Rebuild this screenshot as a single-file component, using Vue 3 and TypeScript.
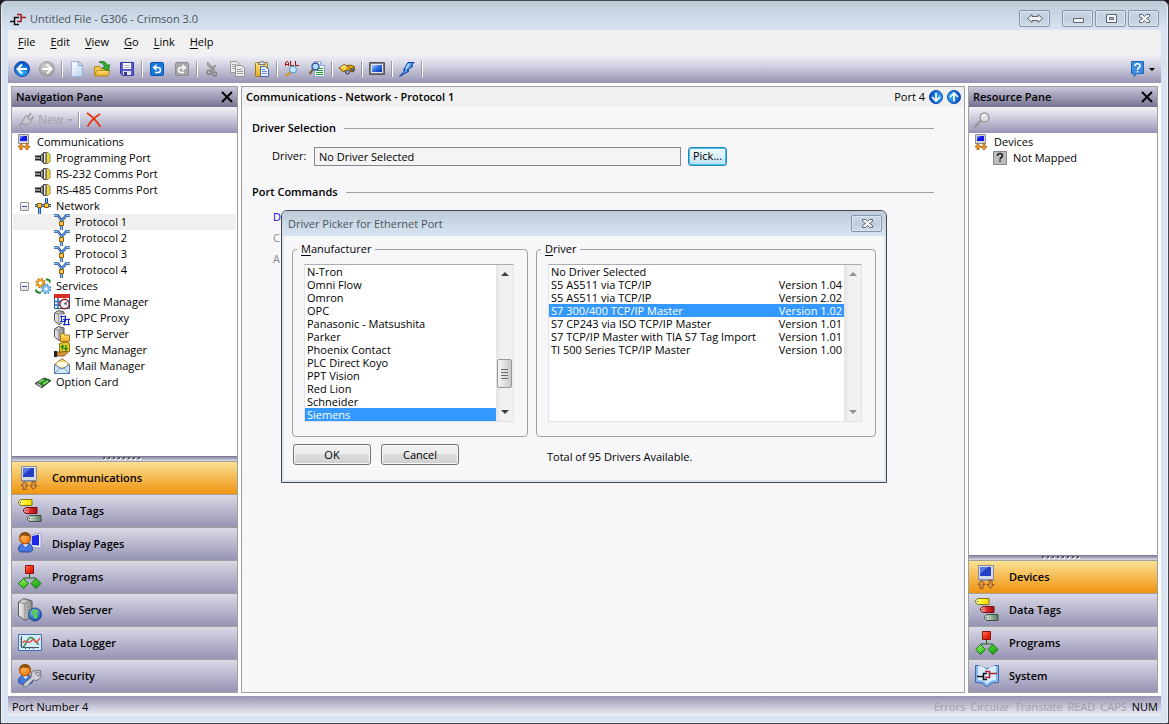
<script setup lang="ts">
import { ref } from 'vue'

interface TreeItem { label: string; icon: string; level: number; toggle?: boolean }
interface NavItem { label: string; icon: string }
interface Tool { label: string; icon: string; disabled?: boolean }
interface Driver { name: string; version: string }

const menus = ['File', 'Edit', 'View', 'Go', 'Link', 'Help']

const toolGroups: Tool[][] = [
  [{ label: 'Back', icon: 'back' }, { label: 'Forward', icon: 'forward', disabled: true }],
  [{ label: 'New', icon: 'new' }, { label: 'Open', icon: 'open' }, { label: 'Save', icon: 'save' }],
  [{ label: 'Undo', icon: 'undo' }, { label: 'Redo', icon: 'redo', disabled: true }],
  [{ label: 'Cut', icon: 'cut', disabled: true }, { label: 'Copy', icon: 'copy', disabled: true }, { label: 'Paste', icon: 'paste' }],
  [{ label: 'Find all', icon: 'findall' }, { label: 'Find', icon: 'findpage' }],
  [{ label: 'Browse', icon: 'binoculars' }],
  [{ label: 'Emulator', icon: 'screen' }],
  [{ label: 'Download', icon: 'flash' }],
]

const tree: TreeItem[] = [
  { label: 'Communications', icon: 'comms', level: 0 },
  { label: 'Programming Port', icon: 'port', level: 1 },
  { label: 'RS-232 Comms Port', icon: 'port', level: 1 },
  { label: 'RS-485 Comms Port', icon: 'port', level: 1 },
  { label: 'Network', icon: 'network', level: 1, toggle: true },
  { label: 'Protocol 1', icon: 'protocol', level: 2 },
  { label: 'Protocol 2', icon: 'protocol', level: 2 },
  { label: 'Protocol 3', icon: 'protocol', level: 2 },
  { label: 'Protocol 4', icon: 'protocol', level: 2 },
  { label: 'Services', icon: 'services', level: 1, toggle: true },
  { label: 'Time Manager', icon: 'time', level: 2 },
  { label: 'OPC Proxy', icon: 'opc', level: 2 },
  { label: 'FTP Server', icon: 'ftp', level: 2 },
  { label: 'Sync Manager', icon: 'sync', level: 2 },
  { label: 'Mail Manager', icon: 'mail', level: 2 },
  { label: 'Option Card', icon: 'card', level: 1 },
]

const resources: TreeItem[] = [
  { label: 'Devices', icon: 'comms', level: 0 },
  { label: 'Not Mapped', icon: 'unmapped', level: 1 },
]

const navItems: NavItem[] = [
  { label: 'Communications', icon: 'comms-lg' },
  { label: 'Data Tags', icon: 'tags' },
  { label: 'Display Pages', icon: 'pages' },
  { label: 'Programs', icon: 'programs' },
  { label: 'Web Server', icon: 'web' },
  { label: 'Data Logger', icon: 'logger' },
  { label: 'Security', icon: 'security' },
]

const resourceNav: NavItem[] = [
  { label: 'Devices', icon: 'comms-lg' },
  { label: 'Data Tags', icon: 'tags' },
  { label: 'Programs', icon: 'programs' },
  { label: 'System', icon: 'system' },
]

const makers = ['N-Tron', 'Omni Flow', 'Omron', 'OPC', 'Panasonic - Matsushita', 'Parker', 'Phoenix Contact',
  'PLC Direct Koyo', 'PPT Vision', 'Red Lion', 'Schneider', 'Siemens']

const drivers: Driver[] = [
  { name: 'No Driver Selected', version: '' },
  { name: 'S5 AS511 via TCP/IP', version: 'Version 1.04' },
  { name: 'S5 AS511 via TCP/IP', version: 'Version 2.02' },
  { name: 'S7 300/400 TCP/IP Master', version: 'Version 1.02' },
  { name: 'S7 CP243 via ISO TCP/IP Master', version: 'Version 1.01' },
  { name: 'S7 TCP/IP Master with TIA S7 Tag Import', version: 'Version 1.01' },
  { name: 'TI 500 Series TCP/IP Master', version: 'Version 1.00' },
]

const flags = ['Errors', 'Circular', 'Translate', 'READ', 'CAPS', 'NUM']

const treeSelected = ref('Protocol 1')
const makerSelected = ref('Siemens')
const driverSelected = ref(3)
const navSelected = ref('Communications')
const resourceSelected = ref('Devices')
</script>

<template>
  <svg class="defs" width="0" height="0" aria-hidden="true">
    <defs>
      <radialGradient id="g-blue" cx=".5" cy=".75" r=".7"><stop offset="0" stop-color="#35b4ff" /><stop offset="1" stop-color="#0a4fc4" /></radialGradient>
      <radialGradient id="g-grey" cx=".4" cy=".3" r=".8"><stop offset="0" stop-color="#d0d0d0" /><stop offset="1" stop-color="#969696" /></radialGradient>
      <linearGradient id="g-page" x1="0" y1="0" x2="1" y2="1"><stop offset="0" stop-color="#fff" /><stop offset="1" stop-color="#b4d0f0" /></linearGradient>
      <linearGradient id="g-gold" x1="0" y1="0" x2="0" y2="1"><stop offset="0" stop-color="#ffe780" /><stop offset="1" stop-color="#e9a820" /></linearGradient>
      <linearGradient id="g-screen" x1="0" y1="0" x2="1" y2="1"><stop offset="0" stop-color="#b8dcff" /><stop offset=".5" stop-color="#2b6be0" /><stop offset="1" stop-color="#0a2ca8" /></linearGradient>
      <linearGradient id="g-server" x1="0" y1="0" x2="1" y2="0"><stop offset="0" stop-color="#f2f2f2" /><stop offset="1" stop-color="#8c8c8c" /></linearGradient>
      <linearGradient id="g-red" x1="0" y1="0" x2="1" y2="1"><stop offset="0" stop-color="#ff8a6a" /><stop offset=".5" stop-color="#f03010" /><stop offset="1" stop-color="#c81010" /></linearGradient>
      <linearGradient id="g-tag-yellow" x1="0" y1="0" x2="1" y2="0"><stop offset="0" stop-color="#fffcc0" /><stop offset=".5" stop-color="#fff020" /><stop offset="1" stop-color="#f0d808" /></linearGradient>
      <linearGradient id="g-tag-red" x1="0" y1="0" x2="1" y2="0"><stop offset="0" stop-color="#ffc8c0" /><stop offset=".5" stop-color="#e02828" /><stop offset="1" stop-color="#a80c10" /></linearGradient>
      <linearGradient id="g-tag-green" x1="0" y1="0" x2="1" y2="0"><stop offset="0" stop-color="#e0ece0" /><stop offset="1" stop-color="#587860" /></linearGradient>
      <linearGradient id="g-green" x1="0" y1="0" x2="1" y2="1"><stop offset="0" stop-color="#a8f070" /><stop offset=".5" stop-color="#40c828" /><stop offset="1" stop-color="#189018" /></linearGradient>
      <radialGradient id="g-face" cx=".4" cy=".4" r=".7"><stop offset="0" stop-color="#ffb050" /><stop offset="1" stop-color="#e07008" /></radialGradient>
      <radialGradient id="g-globe" cx=".4" cy=".3" r=".8"><stop offset="0" stop-color="#7cc4ff" /><stop offset="1" stop-color="#0c3c9c" /></radialGradient>
    </defs>

    <symbol id="i-logo" viewBox="0 0 16 16">
      <path d="M0 10.500h4.500M9 6.500H4.500v7H9M7 13.500" fill="none" stroke="#111" stroke-width="1.500" />
      <path d="M7 3.500h4v7H7M11 6.500h5" fill="none" stroke="#a01820" stroke-width="1.500" />
    </symbol>

    <symbol id="i-back" viewBox="0 0 16 16">
      <circle cx="8" cy="8" r="7.500" fill="url(#g-blue)" stroke="#0c48a8" />
      <path d="M8 3.500 3.500 8 8 12.500M4 8h9" fill="none" stroke="#fff" stroke-width="2" />
    </symbol>
    <symbol id="i-forward" viewBox="0 0 16 16">
      <circle cx="8" cy="8" r="7.500" fill="url(#g-grey)" stroke="#a0a0a0" />
      <path d="M8 3.500 12.500 8 8 12.500M12 8H3" fill="none" stroke="#fff" stroke-width="2" />
    </symbol>
    <symbol id="i-new" viewBox="0 0 16 16">
      <path d="M2.500.5h7l4 4v11h-11z" fill="url(#g-page)" stroke="#9ab4dc" />
      <path d="M9.500.5v4h4z" fill="#eef5ff" stroke="#86a4d4" />
    </symbol>
    <symbol id="i-open" viewBox="0 0 16 16">
      <path d="M.5 14.500v-9h5l1 2h7v7z" fill="#f2c84a" stroke="#b88a18" />
      <path d="M.5 15 3 9.500h13L13.500 15z" fill="url(#g-gold)" stroke="#b88a18" />
      <path d="M5 1C9-.5 12 .5 13 4.500l2.500-1L14.500 10 8.500 7l2-1C10 3.500 8.500 2 5 1z" fill="#35b035" stroke="#167016" stroke-width=".8" />
    </symbol>
    <symbol id="i-save" viewBox="0 0 16 16">
      <path d="M1.500 1.500h13v13h-11l-2-2z" fill="#5a5ad0" stroke="#3a3aa4" />
      <path d="M4 2h8v6H4z" fill="#fff" />
      <path d="M5 4.500h6M5 6.500h6" stroke="#b8b8cc" />
      <path d="M4 10h8v4H4z" fill="#e4e4f0" />
      <path d="M5 11h3v3H5z" fill="#333a80" />
    </symbol>
    <symbol id="i-undo" viewBox="0 0 16 16">
      <rect x="1.500" y="1.500" width="13" height="13" rx="1.500" fill="#1778d8" stroke="#0c54b0" />
      <path d="M5 6.500h4a2.500 2.500 0 0 1 0 5H6" fill="none" stroke="#fff" stroke-width="1.600" />
      <path d="M7.500 3v7L3.500 6.500z" fill="#fff" />
    </symbol>
    <symbol id="i-redo" viewBox="0 0 16 16">
      <rect x="1.500" y="1.500" width="13" height="13" rx="1.500" fill="#a8a8a8" stroke="#8c8c8c" />
      <path d="M11 6.500H7a2.500 2.500 0 0 0 0 5h3" fill="none" stroke="#fff" stroke-width="1.600" />
      <path d="M8.500 3v7l4-3.500z" fill="#fff" />
    </symbol>
    <symbol id="i-cut" viewBox="0 0 16 16">
      <path d="M3.500 1v3L9 10l1.500-1zM12 4 8 6.500l-1 4 2-1z" fill="#a8a8a8" stroke="#888" stroke-width=".8" />
      <circle cx="5" cy="11.500" r="2" fill="none" stroke="#848484" stroke-width="1.500" />
      <circle cx="10.500" cy="13" r="2" fill="none" stroke="#848484" stroke-width="1.500" />
    </symbol>
    <symbol id="i-copy" viewBox="0 0 16 16">
      <path d="M1.500.5h6l2 2v9h-8z" fill="#ececec" stroke="#9a9a9a" />
      <path d="M3 3.500h4M3 5.500h4M3 7.500h3" stroke="#a4a4a4" />
      <path d="M6.500 4.500h6l3 3v8h-9z" fill="#eee" stroke="#909090" />
      <path d="M8 8.500h5M8 10.500h6M8 12.500h6" stroke="#999" />
    </symbol>
    <symbol id="i-paste" viewBox="0 0 16 16">
      <rect x="1.500" y="1.500" width="12" height="14" rx="1" fill="url(#g-gold)" stroke="#a07818" />
      <path d="M4.500 3.500v-2h2a1.500 1.500 0 0 1 3 0h2v2z" fill="#ddd" stroke="#777" />
      <path d="M6.500 5.500h5l3 3v7h-8z" fill="#e4eefc" stroke="#4868a8" />
      <path d="M8 8.500h3M8 10.500h5M8 12.500h5" stroke="#6a8cd0" />
    </symbol>
    <symbol id="i-findall" viewBox="0 0 16 16">
      <path d="M1.500 5V2l1-1.500h1l1 1.500v3M1.500 3.500h3M6.500 0v4.500H10M11.500 0v4.500H15" stroke="#a01010" fill="none" />
      <path d="m7 11-5 4" stroke="#d89830" stroke-width="2.500" />
      <circle cx="9" cy="8.500" r="3.500" fill="#c4e8ff" stroke="#4a90c8" />
    </symbol>
    <symbol id="i-findpage" viewBox="0 0 16 16">
      <path d="M5.500.5h6l4 4v11h-10z" fill="#f2f6ff" stroke="#90a4cc" />
      <path d="M11.500.5v4h4" fill="#c8d8f4" stroke="#90a4cc" />
      <path d="M10 7.500h4M8 9.500h6M7 11.500h7M7 13.500h7" stroke="#22a022" />
      <path d="M4 8.500.5 13" stroke="#806038" stroke-width="2.200" />
      <circle cx="6.500" cy="5.500" r="3.500" fill="#b0dcff" stroke="#33549c" stroke-width="1.400" />
    </symbol>
    <symbol id="i-binoculars" viewBox="0 0 16 16">
      <path d="m0 7 5-3.500 3 1.500 3-1 4.500 1.500L16 9l-2 2-2.500-.5L9 13l-2-.5-1-3L4.500 11z" fill="#f0b810" stroke="#7a5204" />
      <path d="m2 7 3-2 2 1M4.500 8.500l1.500-1" stroke="#fff4b0" fill="none" stroke-width="1.500" />
      <path d="m8 5 3 2v3" stroke="#7a5204" fill="none" />
      <circle cx="8.500" cy="11" r="2" fill="#88b8e8" stroke="#323" stroke-width=".8" />
      <circle cx="13.500" cy="8.500" r="1.600" fill="#4a7ac0" stroke="#432" stroke-width=".8" />
    </symbol>
    <symbol id="i-screen" viewBox="0 0 16 16">
      <path d="M.5 1.500h15v12H.5z" fill="#7c7c84" stroke="#55555c" />
      <path d="M2.500 3.500h11v8h-11z" fill="url(#g-screen)" stroke="#e4e4f0" />
    </symbol>
    <symbol id="i-flash" viewBox="0 0 16 16">
      <path d="M9 1.500h6L12 5h2L8 9.500 10 10 .5 15.500 6 9H4.500z" fill="#52a0ff" stroke="#153c98" />
      <path d="M10 3 7 7.500" stroke="#b8e0ff" stroke-width="1.500" />
    </symbol>
    <symbol id="i-help" viewBox="0 0 16 16">
      <path d="M2.500.5h12v12H8l-3 3v-3H2.500z" fill="#3c8ce0" stroke="#1c68b8" />
      <path d="M6 5c0-3 5-3 5 0 0 2-2.500 1.500-2.500 4M8.500 10v1.500" fill="none" stroke="#fff" stroke-width="1.600" />
    </symbol>
    <symbol id="i-plug" viewBox="0 0 16 16">
      <path d="m1 14 4-4M10 5l3-4M13 8l3-4" stroke="#999" stroke-width="1.500" />
      <path d="M8 3.500 13.500 9 10 12l-5 .5L4 10z" fill="#c8c8ce" stroke="#929298" />
      <path d="M12.500 9.500v6M9.500 12.500h6" stroke="#b4b4bc" stroke-width="2" />
    </symbol>
    <symbol id="i-delete" viewBox="0 0 16 16">
      <path d="M1 1c5 3 9 7 13.500 14M14 2C9 5 4 10 1.500 14.500" fill="none" stroke="#e83008" stroke-width="1.600" />
    </symbol>
    <symbol id="i-magnifier" viewBox="0 0 16 16">
      <path d="m6.500 9-6 6.500" stroke="#909098" stroke-width="2" />
      <circle cx="10.500" cy="5.500" r="4.500" fill="#dcdce2" stroke="#989898" stroke-width="1.400" />
      <path d="M8 5c.5-2 2-2.500 3.500-2.500" stroke="#fff" fill="none" stroke-width="1.500" />
    </symbol>

    <symbol id="i-comms" viewBox="0 0 16 16">
      <path d="M2.500.5h10v9h-10z" fill="#d4d4dc" stroke="#8c8c94" />
      <path d="M4 2h7v5H4z" fill="#1418e8" /><path d="M4 2h4L4 5z" fill="#5878ff" />
      <path d="M5 9.500 2 13h2v3h2v-3h2zM11 16l3-3.500h-2V9.500h-2v3H8z" fill="#f0a020" stroke="#a85808" stroke-width=".8" />
    </symbol>
    <symbol id="i-port" viewBox="0 0 16 16">
      <path d="M0 6.500h6M0 9.500h6" stroke="#222" stroke-width="1.800" />
      <path d="M5.500 6 8 3.500v9L5.500 10z" fill="#bbb" stroke="#222" />
      <path d="M8.500 2.500h2.500v11H8.500z" fill="#e4e4e4" stroke="#444" />
      <path d="M11.500 2.500h1.500l2 2v7l-2 2h-1.500z" fill="#f0e020" stroke="#666" stroke-width=".8" />
    </symbol>
    <symbol id="i-network" viewBox="0 0 16 16">
      <path d="M0 7.500h16M4.500 8v8M11.500 0v7" stroke="#1c58a8" stroke-width="3" />
      <path d="M0 7.500h16M4.500 8v8M11.500 0v7" stroke="#80bcf0" />
      <path d="M2.500 5.500h4v4h-4zM9.500 5.500h4v4h-4z" fill="#ffc840" stroke="#905c08" />
    </symbol>
    <symbol id="i-protocol" viewBox="0 0 16 16">
      <path d="M0 1.500h4l3.500 4.500M16 1.500h-4L8.500 6M7.500 6v10" stroke="#1c4c9c" stroke-width="2.600" fill="none" />
      <path d="M0 1.500h4l3.500 4.500M16 1.500h-4L8.500 6M7.500 6v10" stroke="#80c0f4" fill="none" />
      <path d="M5.500 7.500h4v4h-4z" fill="#ffc840" stroke="#905c08" />
    </symbol>
    <symbol id="i-services" viewBox="0 0 16 16">
      <circle cx="5.500" cy="5" r="4.200" fill="none" stroke="#b06c08" stroke-width="2" stroke-dasharray="1.700 1.600" />
      <circle cx="5.500" cy="5" r="2.900" fill="#fff" stroke="#e8a020" stroke-width="2.400" />
      <circle cx="11" cy="11" r="4.200" fill="none" stroke="#3c80c8" stroke-width="2" stroke-dasharray="1.700 1.600" />
      <circle cx="11" cy="11" r="2.900" fill="#fff" stroke="#78b8f0" stroke-width="2.400" />
      <path d="M11 1.500c2.500-.5 4 .8 4 3M1 11.500c0 2.500 2 3.500 5 3" fill="none" stroke="#18881c" stroke-width="2" />
    </symbol>
    <symbol id="i-time" viewBox="0 0 16 16">
      <path d="M.5.5h15v14H.5z" fill="#fff" stroke="#2050a0" />
      <path d="M0 0h16v4H0z" fill="#d83020" />
      <path d="M0 7.500h8M0 11h8M4 4v10" stroke="#2868c0" stroke-width="1.500" />
      <circle cx="10.500" cy="10" r="4.700" fill="#eef4fa" stroke="#881c18" stroke-width="1.400" />
      <path d="M10.500 10 13 7.500M10.500 10h2.500" stroke="#222" />
    </symbol>
    <symbol id="i-server" viewBox="0 0 16 16">
      <path d="m.5 3 4-2.500L10 2v10l-5 2.500L.5 11z" fill="url(#g-server)" stroke="#505050" />
      <path d="M5 4.500v9M5 4.500 10 2M5 4.500.5 3" stroke="#888" fill="none" />
    </symbol>
    <symbol id="i-opc" viewBox="0 0 16 16">
      <use href="#i-server" width="16" height="16" />
      <path d="M7 6h5v5H7zM10 9h5v5h-5z" fill="#fff" stroke="#fff" stroke-width="3" />
      <path d="M6 6.500h6M7.500 5.500v6M6 11.500h6M11.500 5.500v6M9 9.500h7M10.500 8.500v7M9 14.500h7M14.500 8.500v7" fill="none" stroke="#1828c8" stroke-width="1.200" />
    </symbol>
    <symbol id="i-ftp" viewBox="0 0 16 16">
      <use href="#i-server" width="16" height="16" />
      <path d="M6.500 15.500v-8h3l1 1.500h5v6.500z" fill="url(#g-gold)" stroke="#a87818" />
    </symbol>
    <symbol id="i-sync" viewBox="0 0 16 16">
      <path d="M5.500 1.500 12 0l3.500 1.500v8l-10 1z" fill="#e8c828" stroke="#907008" />
      <path d="M8.500 8V4M7 5.500 8.500 3.500 10 5.500M12 3v4.500M10.500 6 12 8l1.500-2" fill="none" stroke="#108018" stroke-width="1.200" />
      <path d="M3 10h4l6-.5 1 1-4 3.500H3z" fill="#d89838" stroke="#784808" stroke-width=".8" />
      <path d="M0 9h3v6H0z" fill="#222" />
    </symbol>
    <symbol id="i-mail" viewBox="0 0 16 16">
      <path d="M.5 6.500 8 .5l7.500 6v9H.5z" fill="#f4d470" stroke="#988040" />
      <path d="M3 4h10v5H3z" fill="#fffbe0" />
      <path d="M.5 6.500 8 11l7.500-4.500v9H.5z" fill="#d4e6fa" stroke="#5078b0" />
      <path d="m1 15 5-5M15 15l-5-5" stroke="#7498c8" />
    </symbol>
    <symbol id="i-card" viewBox="0 0 16 16">
      <path d="M0 9.500 9 4l7 2.500-9 7z" fill="#208a20" stroke="#303830" />
      <path d="m4 8 5-2.500M8 10l5-3" stroke="#80e070" stroke-width="1.500" />
      <path d="m1 10 6 4v-3L2 8.500z" fill="#c4c4c4" stroke="#444" stroke-width=".7" />
    </symbol>
    <symbol id="i-unmapped" viewBox="0 0 16 16">
      <path d="M1.500 1.500h13v13h-13z" fill="#bcbcbc" stroke="#888" />
      <path d="M5.500 6c0-3.500 5-3 5 0 0 1.500-2.500 1.500-2.500 3.500M8 10.500V12" fill="none" stroke="#222" stroke-width="1.600" />
    </symbol>

    <symbol id="i-comms-lg" viewBox="0 0 24 24">
      <path d="M3.500.5h15v14h-15z" fill="#d8dce4" stroke="#888c98" />
      <path d="M5 2h11v9H5z" fill="#2440c8" /><path d="M5 2h8L5 9z" fill="#5878e0" />
      <path d="M3 15h16v1H3z" fill="#99a" />
      <path d="M6.500 15.500 3 19.500h2v4h3v-4h2zM15.500 23.500l3.500-4h-2v-4h-3v4h-2z" fill="#d89850" stroke="#985418" />
    </symbol>
    <symbol id="i-tags" viewBox="0 0 24 24">
      <path d="M3 .5h11v6H3L.5 4.500v-2z" fill="url(#g-tag-yellow)" stroke="#887808" />
      <path d="M8 8.500h11v6H8l-2.500-2v-2z" fill="url(#g-tag-red)" stroke="#701010" />
      <path d="M12 16.500h11v6H12l-2.500-2v-2z" fill="url(#g-tag-green)" stroke="#405044" />
      <path d="M2 3.500h1M7 11.500h1M11 19.500h1" stroke="#333" />
    </symbol>
    <symbol id="i-person" viewBox="0 0 24 24">
      <path d="M.5 18c0-5 3-7 7-7s7 2 7 7l-2 2h-10z" fill="#4478dc" stroke="#2444a0" />
      <path d="m5 12 2.500 3 2.500-3" fill="#fff" />
      <circle cx="7" cy="6.500" r="5.500" fill="url(#g-face)" stroke="#a05008" />
      <path d="M1 6c0-8 12-8 12 0l-2-2-7-.5z" fill="#8a5010" />
    </symbol>
    <symbol id="i-pages" viewBox="0 0 24 24">
      <path d="m13 3 10-2v15l-10-1z" fill="#f0f2ff" stroke="#a0a4c0" />
      <path d="m14 4 7-1.500v11L14 13z" fill="#1c28e8" />
      <use href="#i-person" width="24" height="24" />
    </symbol>
    <symbol id="i-programs" viewBox="0 0 24 24">
      <path d="M11.500 9v4M5.500 17v-4h12v4" fill="none" stroke="#186020" />
      <path d="M7.500.5h8v8h-8z" fill="url(#g-red)" stroke="#901010" />
      <path d="m5.500 13.500 5 5-5 5-5-5zM18 13.500l5 5-5 5-5-5z" fill="url(#g-green)" stroke="#187018" />
    </symbol>
    <symbol id="i-web" viewBox="0 0 24 24">
      <path d="m.5 4 5-3.500L14 3v16l-7 3.500-6.500-5z" fill="url(#g-server)" stroke="#585858" />
      <path d="M7 6v16M7 6l7-3M7 6 .5 4M9 9l3-1M9 12l3-1" stroke="#888" fill="none" />
      <circle cx="17" cy="16.500" r="6.500" fill="url(#g-globe)" stroke="#1c4898" />
      <path d="m12.500 14 3-2.500 4 .5 1 2-2 1 1.500 3-2 3-2-1-.5-3z" fill="#58c858" />
    </symbol>
    <symbol id="i-logger" viewBox="0 0 24 24">
      <path d="M.5 3.500h23v16H.5z" fill="#d4ecfa" stroke="#4470b0" />
      <path d="M3.500 5v11.500H21M2 8h1.500M2 11h1.500M2 14h1.500M7.500 16v2M11.500 16v2M15.500 16v2" stroke="#456" fill="none" />
      <path d="M5 16c4-3 4-9.500 8-9.500s4 6 8 7" fill="none" stroke="#309848" stroke-width="1.500" />
      <path d="M5 12c2-5 4 1 7-1s3-4 5-1 2 0 5-3" fill="none" stroke="#e05050" stroke-width="1.500" />
    </symbol>
    <symbol id="i-security" viewBox="0 0 24 24">
      <use href="#i-person" width="24" height="24" />
      <path d="m14 7 8.500-.5.5 7-4 3-4-.5-6.500 7-3-.5.5-3 7-6z" fill="#ccced4" stroke="#70747c" />
      <path d="m17 9 4-.5v4z" fill="#fff" stroke="#70747c" />
    </symbol>
    <symbol id="i-system" viewBox="0 0 24 24">
      <path d="M.5 1.500h3L12 5l8.500-3.500h3v17L17 19l-5 4-5-4-6.500-.5z" fill="#88b8f0" stroke="#3c64a8" />
      <path d="M3 2c4-.5 6 1 9 4 3-3 5-4.500 9-4v14c-4 0-6 1-9 4-3-3-5-4-9-4z" fill="#d8ecff" />
      <path d="M2 12.500h6M12 9.500H8.500v6H12" fill="none" stroke="#111" stroke-width="1.600" />
      <path d="M10 7.500h4.500v6H10M15 9.500h7" fill="none" stroke="#b02028" stroke-width="1.600" />
    </symbol>
  </svg>

  <div class="desktop">
    <div class="window">
      <header class="titlebar">
        <svg class="ic"><use href="#i-logo" /></svg>
        <h1 class="title">Untitled File - G306 - Crimson 3.0</h1>
        <button type="button" class="winbtn swap" aria-label="Switch display">
          <svg width="18" height="11" viewBox="0 0 18 11"><path d="M1.500 5.500 6 1.500v2h6v-2l4.500 4-4.500 4v-2H6v2z" /></svg>
        </button>
        <button type="button" class="winbtn" aria-label="Minimize">
          <svg width="18" height="11" viewBox="0 0 18 11"><path d="M4.500 5.500h10v4h-10z" /></svg>
        </button>
        <button type="button" class="winbtn" aria-label="Maximize">
          <svg width="18" height="11" viewBox="0 0 18 11"><path d="M4.500 1.500h10v8h-10zM7.500 4.500v2h4v-2z" /></svg>
        </button>
        <button type="button" class="winbtn" aria-label="Close">
          <svg width="18" height="11" viewBox="0 0 18 11"><path d="M4.500 1.500h3L9.500 3.500l2-2h3v2l-3 2 3 2v2h-3l-2-2-2 2h-3v-2l3-2-3-2z" /></svg>
        </button>
      </header>

      <div class="client">
        <nav class="menubar">
          <button v-for="m in menus" :key="m" type="button"><span class="key">{{ m[0] }}</span>{{ m.slice(1) }}</button>
        </nav>

        <div class="toolbar" role="toolbar">
          <template v-for="(group, g) in toolGroups" :key="g">
            <button v-for="t in group" :key="t.icon" type="button" class="tool" :aria-label="t.label" :disabled="t.disabled">
              <svg class="ic"><use :href="'#i-' + t.icon" /></svg>
            </button>
            <span class="sep"></span>
          </template>
          <button type="button" class="help" aria-label="Help">
            <svg class="ic"><use href="#i-help" /></svg><span class="caret"></span>
          </button>
        </div>

        <div class="workspace">
          <aside class="pane nav">
            <header class="panehead">
              <h2>Navigation Pane</h2>
              <button type="button" class="x" aria-label="Close navigation pane"><svg viewBox="0 0 12 12"><path d="m1 1 10 10M11 1 1 11" /></svg></button>
            </header>
            <div class="panetools">
              <button type="button" class="newbtn" disabled><svg class="ic"><use href="#i-plug" /></svg>New<span class="caret"></span></button>
              <span class="sep"></span>
              <button type="button" class="tool" aria-label="Delete"><svg class="ic"><use href="#i-delete" /></svg></button>
            </div>
            <ul class="tree" role="tree">
              <li v-for="item in tree" :key="item.label" role="treeitem" :aria-selected="item.label === treeSelected"
                :class="['level' + item.level, { parent: item.toggle, selected: item.label === treeSelected }]" @click="treeSelected = item.label">
                <button v-if="item.toggle" type="button" class="toggle" :aria-label="'Collapse ' + item.label"></button>
                <svg class="ic"><use :href="'#i-' + item.icon" /></svg>
                <span>{{ item.label }}</span>
              </li>
            </ul>
            <div class="grip"><i v-for="n in 8" :key="n"></i></div>
            <button v-for="n in navItems" :key="n.label" type="button" :class="['navbtn', { active: n.label === navSelected }]" @click="navSelected = n.label">
              <svg class="lg"><use :href="'#i-' + n.icon" /></svg>{{ n.label }}
            </button>
          </aside>

          <main class="pane center">
            <header class="crumb">
              <h2>Communications - Network - Protocol 1</h2>
              <span>Port 4</span>
              <button type="button" class="round down" aria-label="Next port"><svg class="ic"><use href="#i-back" /></svg></button>
              <button type="button" class="round up" aria-label="Previous port"><svg class="ic"><use href="#i-back" /></svg></button>
            </header>
            <div class="form">
              <h3>Driver Selection</h3>
              <div class="field">
                <label for="driver">Driver:</label>
                <input id="driver" type="text" readonly value="No Driver Selected">
                <button type="button" class="pick">Pick...</button>
              </div>
              <h3>Port Commands</h3>
              <div class="commands">
                <a href="#">D</a>
                <button type="button" disabled>C</button>
                <button type="button" disabled>A</button>
              </div>
            </div>
          </main>

          <aside class="pane res">
            <header class="panehead">
              <h2>Resource Pane</h2>
              <button type="button" class="x" aria-label="Close resource pane"><svg viewBox="0 0 12 12"><path d="m1 1 10 10M11 1 1 11" /></svg></button>
            </header>
            <div class="panetools">
              <button type="button" class="tool" aria-label="Search" disabled><svg class="ic"><use href="#i-magnifier" /></svg></button>
            </div>
            <ul class="tree" role="tree">
              <li v-for="item in resources" :key="item.label" role="treeitem" :class="'level' + item.level">
                <svg class="ic"><use :href="'#i-' + item.icon" /></svg>
                <span>{{ item.label }}</span>
              </li>
            </ul>
            <div class="grip"><i v-for="n in 8" :key="n"></i></div>
            <button v-for="n in resourceNav" :key="n.label" type="button" :class="['navbtn', { active: n.label === resourceSelected }]" @click="resourceSelected = n.label">
              <svg class="lg"><use :href="'#i-' + n.icon" /></svg>{{ n.label }}
            </button>
          </aside>
        </div>

        <footer class="status">
          <span class="message">Port Number 4</span>
          <span v-for="f in flags" :key="f" :class="['flag', { on: f === 'NUM' }]">{{ f }}</span>
        </footer>
      </div>

      <section class="dialog" role="dialog" aria-labelledby="dialog-title">
        <header class="dialoghead">
          <h2 id="dialog-title" class="title">Driver Picker for Ethernet Port</h2>
          <button type="button" class="winbtn" aria-label="Close dialog">
            <svg width="18" height="11" viewBox="0 0 18 11"><path d="M4.500 1.500h3L9.500 3.500l2-2h3v2l-3 2 3 2v2h-3l-2-2-2 2h-3v-2l3-2-3-2z" /></svg>
          </button>
        </header>
        <div class="dialogbody">
          <fieldset>
            <legend><span class="key">M</span>anufacturer</legend>
            <div class="listbox">
              <ul role="listbox" aria-label="Manufacturer">
                <li v-for="m in makers" :key="m" role="option" :aria-selected="m === makerSelected" :class="{ chosen: m === makerSelected }" @click="makerSelected = m">{{ m }}</li>
              </ul>
              <div class="scroll">
                <span class="arrow up"></span>
                <span class="thumb"></span>
                <span class="arrow down"></span>
              </div>
            </div>
          </fieldset>
          <fieldset>
            <legend><span class="key">D</span>river</legend>
            <div class="listbox">
              <ul role="listbox" aria-label="Driver">
                <li v-for="(d, i) in drivers" :key="i" role="option" :aria-selected="i === driverSelected" :class="{ chosen: i === driverSelected }" @click="driverSelected = i">
                  <span>{{ d.name }}</span><span>{{ d.version }}</span>
                </li>
              </ul>
              <div class="scroll off">
                <span class="arrow up"></span>
                <span class="arrow down"></span>
              </div>
            </div>
          </fieldset>
          <div class="actions">
            <button type="button" class="push">OK</button>
            <button type="button" class="push">Cancel</button>
          </div>
          <p class="total">Total of 95 Drivers Available.</p>
        </div>
      </section>
    </div>
  </div>
</template>

<style>
body { margin: 0; background: #201a20; }
</style>

<style scoped>
.defs { position: absolute; }
.desktop { min-height: 100vh; display: flex; background: #201a20; font: 11px/16px "Open Sans", "Noto Sans", sans-serif; color: #000; }
.desktop *, .desktop { box-sizing: border-box; }
.window { position: relative; flex: 1; display: flex; flex-direction: column; min-width: 0; padding: 0 7px 8px; border: 1px solid #45454a; border-radius: 7px 7px 2px 2px; background: #d8e4f1; box-shadow: inset 0 0 0 1px #eaf1f8; }
button, input { font: inherit; color: inherit; margin: 0; }
button { padding: 0; border: 0; background: none; }
h1, h2, h3, p, ul { margin: 0; padding: 0; }
h1, h2, h3 { font-size: inherit; font-weight: 600; }
li { list-style: none; }
.ic { width: 16px; height: 16px; flex: none; display: block; }
.lg { width: 24px; height: 24px; flex: none; }
.key { text-decoration: underline; text-underline-offset: 2px; }

.titlebar { height: 29px; margin: 0 -6px; padding: 6px 8px 0 8px; display: flex; align-items: center; background: linear-gradient(#bdcbd9, #d8e4f1); border-radius: 6px 6px 0 0; }
.title { flex: 1; font-size: 11px; font-weight: 400; color: #4c535c; }
.titlebar .title { margin-left: 4px; }
.winbtn { width: 31px; height: 17px; margin-left: 2px; display: grid; place-items: center; border: 1px solid #8795ab; border-radius: 2px; background: linear-gradient(#cbd8e5, #c0cedd 50%, #d0dce9); box-shadow: inset 0 0 0 1px #dae5f0; }
.winbtn path { fill: #f4f4f4; stroke: #5d6470; fill-rule: evenodd; }
.winbtn.swap { margin-right: 10px; }

.client { flex: 1; display: flex; flex-direction: column; background: #fff; }
.menubar { height: 25px; display: flex; align-items: center; gap: 15px; padding: 0 0 1px 10px; background: #f0f0f0; }
.toolbar { height: 28px; display: flex; align-items: center; padding: 0 6px 0 1px; background: linear-gradient(#f2f1f7, #d0cfdf 40%, #9694b4); }
.tool { width: 25px; height: 24px; display: grid; place-items: center; }
.sep { width: 2px; height: 16px; margin: 0 1px 0 2px; border-left: 1px solid #9a9aa0; border-right: 1px solid #fff; }
.help { margin-left: auto; display: flex; align-items: center; gap: 4px; }
.caret { border: 3px solid transparent; border-top-color: currentColor; border-bottom: 0; }

.workspace { flex: 1; display: flex; gap: 3px; padding: 3px; }
.pane { display: flex; flex-direction: column; border: 1px solid #a0a0a0; background: #fff; }
.nav { width: 227px; }
.center { flex: 1; min-width: 0; background: #f7f7fa; }
.res { width: 190px; }
.panehead { height: 20px; display: flex; align-items: center; justify-content: space-between; padding: 0 4px; background: linear-gradient(#c8c7da, #74728f); }
.x { width: 12px; height: 12px; }
.x svg { display: block; stroke: #000; stroke-width: 2; fill: none; }
.panetools { height: 26px; display: flex; align-items: center; background: linear-gradient(#f2f1f7, #d0cfdf 40%, #9694b4); }
.newbtn { display: flex; align-items: center; padding-left: 6px; gap: 4px; color: #a4a4ac; font-size: 12px; }
.newbtn .caret { margin-right: 3px; }
.tree { flex: 1; padding: 1px; }
.tree li { height: 16px; display: flex; align-items: center; gap: 5px; padding-left: 3px; }
.tree li.level1 { padding-left: 22px; }
.tree li.level2 { padding-left: 41px; }
.tree li.parent { padding-left: 7px; }
.tree li.selected { background: #f0f0f0; }
.toggle { width: 9px; height: 9px; margin-right: 1px; border: 1px solid #929292; border-radius: 1px; background: linear-gradient(#2f4fa0, #2f4fa0) center / 5px 1px no-repeat, linear-gradient(#fff, #ddd); }
.grip { height: 6px; padding-right: 6px; display: flex; justify-content: center; align-items: flex-start; gap: 3px; background: linear-gradient(#74728f, #dddce8); border-bottom: 1px solid #a0a0a0; }
.grip i { width: 2px; height: 2px; margin-top: 1px; background: #55555c; box-shadow: 1px 1px #fff; }
.navbtn { height: 33px; display: flex; align-items: center; gap: 10px; padding-left: 6px; font-weight: 600; text-align: left; background: linear-gradient(#dad9e6, #9694b4); border-bottom: 1px solid #a0a0a0; }
.navbtn:last-child { height: 32px; border-bottom: 0; }
.navbtn.active { background: linear-gradient(#fbe194, #f0930f); }

.crumb { height: 20px; display: flex; align-items: center; gap: 4px; padding: 0 3px 0 4px; background: #f0f0f0; }
.crumb h2 { flex: 1; }
.round .ic { width: 14px; height: 14px; }
.down .ic { transform: rotate(-90deg); }
.up .ic { transform: rotate(90deg); }
.form { padding: 13px 30px 0 10px; }
.form h3 { display: flex; align-items: center; gap: 8px; }
.form h3::after { content: ""; flex: 1; border-top: 1px solid #a0a0a0; }
.field { height: 48px; display: flex; align-items: center; padding: 0 0 8px 20px; }
.field label { width: 42px; }
.field input { flex: 0 1 367px; min-width: 0; height: 19px; padding: 0 4px; border: 1px solid #828790; background: #f4f4f4; outline: 0; }
.pick { width: 39px; height: 19px; margin-left: 7px; border: 1px solid #3a7db0; border-radius: 3px; background: linear-gradient(#f0f8fd, #dcf0fa 50%, #b8dcf0); box-shadow: inset 0 0 0 1px #38c8f4; }
.commands { display: flex; flex-direction: column; align-items: flex-start; gap: 5px; padding: 9px 0 0 21px; color: #888; }
.commands a { color: #2200e0; text-decoration: none; }

.status { height: 20px; display: flex; align-items: center; gap: 5px; padding: 1px 3px 0 4px; margin-bottom: -1px; background: linear-gradient(#9694b4, #f2f1f7); }
.message { flex: 1; }
.flag { color: #a0a0a8; }
.flag.on { color: #000; }

.dialog { position: absolute; left: 280px; top: 209px; width: 606px; border: 1px solid #45454a; border-radius: 6px 6px 0 0; background: #dfe8f2; padding: 0 2px 2px; }
.dialoghead { height: 25px; margin: 0 -2px; padding: 0 4px 0 6px; display: flex; align-items: center; border-radius: 5px 5px 0 0; background: linear-gradient(#bdcbd9, #d8e4f1); }
.dialogbody { height: 244px; padding: 5px 8px 0; display: grid; grid-template-columns: 236px 1fr; grid-template-rows: 196px auto; column-gap: 8px; background: #f7f7fa; }
fieldset { min-width: 0; margin: 0; padding: 7px 13px 15px 11px; border: 1px solid #a0a0a0; border-radius: 4px; }
legend { margin-left: -7px; padding: 0 4px; line-height: 16px; }
.listbox { height: 158px; display: flex; background: #fff; border: 1px solid #e2e3ea; border-top-color: #abadb3; }
.listbox ul { flex: 1; line-height: 13px; }
.listbox li { height: 13px; display: flex; justify-content: space-between; padding: 0 2px; white-space: nowrap; }
.listbox li.chosen { background: #3399ff; color: #fff; }
.scroll { width: 17px; display: flex; flex-direction: column; align-items: center; padding: 7px 0; background: linear-gradient(90deg, #e3e3e3, #f1f1f1 30%, #f1f1f1); }
.arrow { border: 4px solid transparent; }
.arrow.up { border-bottom-color: #404040; border-top: 0; }
.arrow.down { border-top-color: #404040; border-bottom: 0; margin-top: auto; }
.off .arrow.up { border-bottom-color: #909090; }
.off .arrow.down { border-top-color: #909090; }
.thumb { width: 15px; height: 29px; margin-top: 83px; border: 1px solid #979797; border-radius: 2px; background: repeating-linear-gradient(#666 0 1px, transparent 1px 3px) center / 7px 10px no-repeat, linear-gradient(90deg, #f5f5f5, #e0e0e0 50%, #c8c8c8); }
.actions { display: flex; gap: 10px; padding: 7px 0 0 1px; }
.push { width: 78px; height: 21px; border: 1px solid #707070; border-radius: 3px; background: linear-gradient(#f2f2f2, #ebebeb 50%, #ddd 50%, #cfcfcf); box-shadow: inset 0 0 0 1px #fafafa; }
.total { padding: 12px 0 0 11px; }
</style>
